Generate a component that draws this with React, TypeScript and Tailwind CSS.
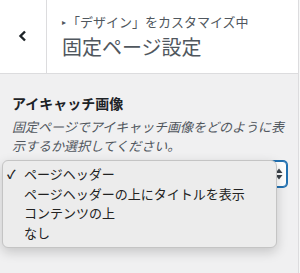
const options = [
  'ページヘッダー',
  'ページヘッダーの上にタイトルを表示',
  'コンテンツの上',
  'なし',
]

export default function App() {
  return (
    <div
      className="w-[300px] h-[273px] bg-[#f6f7f7] overflow-hidden"
      style={{ fontFamily: '"Noto Sans CJK JP", "Noto Sans", sans-serif' }}
    >
      <div className="w-[299px] h-full border-r border-[#dcdcde] bg-[#f0f0f1] relative">
        {/* header */}
        <div className="h-[74px] bg-white border-b border-[#dcdcde] flex">
          <button className="w-[47px] h-full border-r border-[#dcdcde] flex items-center justify-center">
            <svg width="10" height="12" viewBox="0 0 10 12" className="mt-[-1px]">
              <path d="M7 1.5 L2.5 6 L7 10.5" fill="none" stroke="#1d2327" strokeWidth="2.4" />
            </svg>
          </button>
          <div className="pl-[15px] pt-[13px] flex flex-col">
            <div className="text-[13px] leading-[18px] text-[#50575e] flex items-center">
              <span className="text-[8px] mr-[1px]">▸</span>
              <span>「デザイン」をカスタマイズ中</span>
            </div>
            <div className="text-[20px] leading-[26px] mt-[3px] text-[#50575e] font-normal">固定ページ設定</div>
          </div>
        </div>

        {/* control */}
        <div className="px-[12px] pt-[17px]">
          <div className="text-[14px] leading-[24px] font-bold text-[#1d2327]">アイキャッチ画像</div>
          <p className="mt-[2px] text-[13px] leading-[19px] italic text-[#50575e]">
            固定ページでアイキャッチ画像をどのように表示するか選択してください。
          </p>
          <div className="mt-[6px] h-[26px] w-[275px] rounded-[4px] border border-[#2271b1] bg-white shadow-[0_0_0_1px_#2271b1] relative">
            <svg width="8" height="12" viewBox="0 0 8 12" className="absolute right-[3px] top-[6px]">
              <path d="M4 0.5 L7.5 5 L0.5 5 Z M4 11.5 L7.5 7 L0.5 7 Z" fill="#3c434a" />
            </svg>
          </div>
        </div>

        {/* open dropdown menu */}
        <div className="absolute left-[2px] top-[160px] w-[275px] rounded-[6px] border border-[#c4c4c4] bg-[#ececec] shadow-[0_4px_12px_rgba(0,0,0,0.18)] pt-[3px] pb-[5px]">
          {options.map((o, i) => (
            <div key={o} className="h-[19.5px] flex items-center text-[13px] text-[#222]">
              <span className="w-[21px] pl-[4px] text-[12px] font-bold">{i === 0 ? '✓' : ''}</span>
              <span>{o}</span>
            </div>
          ))}
        </div>
      </div>
    </div>
  )
}
